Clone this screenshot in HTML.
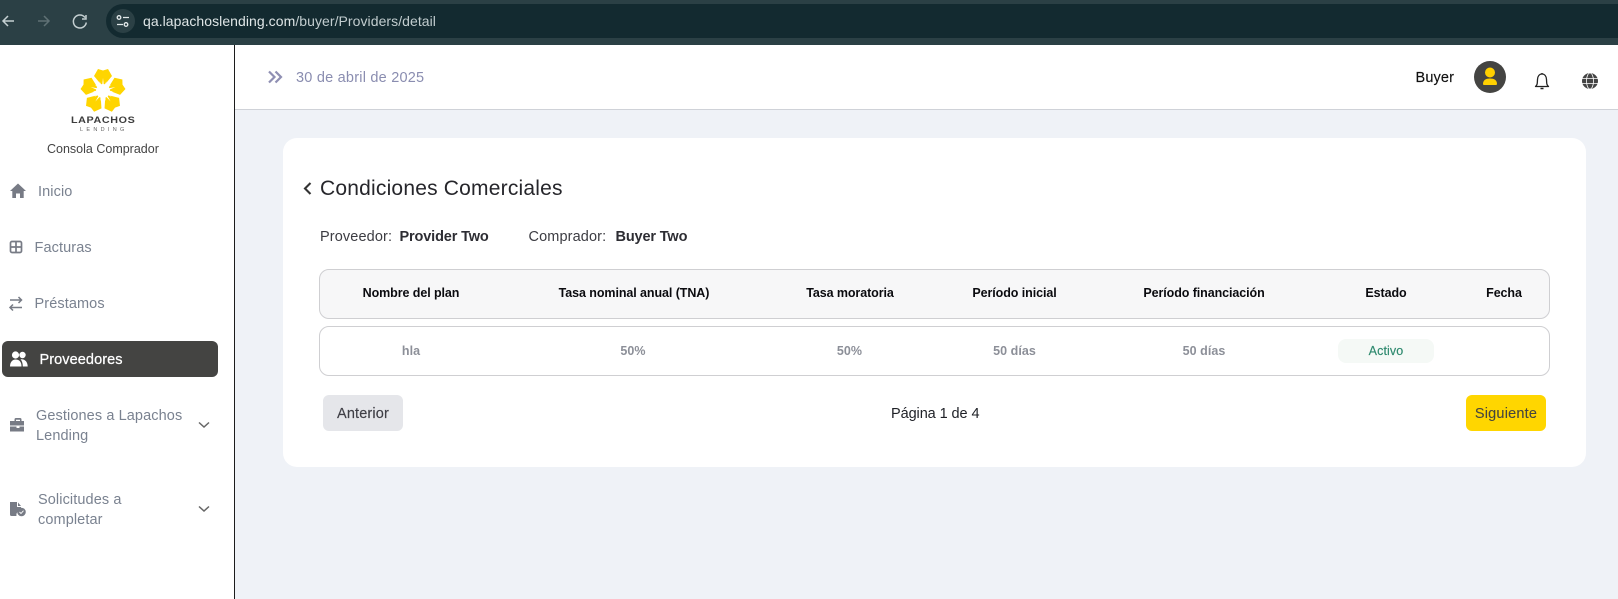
<!DOCTYPE html>
<html lang="es"><head><meta charset="utf-8"><title>Condiciones Comerciales</title>
<style>
*{box-sizing:border-box;margin:0;padding:0}
html,body{width:1618px;height:599px;overflow:hidden;background:#fff;font-family:"Liberation Sans",sans-serif}
.a{position:absolute}
.t{position:absolute;white-space:nowrap;line-height:20px;height:20px}
.c{transform:translateX(-50%)}
.nav{font-size:14.500px;color:#7a8290;letter-spacing:.1px}
.h{font-size:12.500px;font-weight:700;color:#0b0b0f;letter-spacing:-.08px}
.d{font-size:12.500px;font-weight:700;color:#8c8f98;letter-spacing:.05px}
svg{position:absolute;display:block;overflow:visible}
</style></head><body>
<!-- browser bar -->
<div class="a" style="left:0;top:0;width:1618px;height:45px;background:#2b4045"></div>
<div class="a" style="left:106px;top:4px;width:1512px;height:34px;background:#132a30;border-radius:17px 0 0 17px"></div>
<div class="a" style="left:111px;top:9px;width:24px;height:24px;border-radius:50%;background:#2b4045"></div>
<svg style="left:0;top:0" width="140" height="44" fill="none">
<path d="M14 21H3M8 16L3 21L8 26" stroke="#c5d0d2" stroke-width="1.500"/>
<path d="M38 21H49M44 16L49 21L44 26" stroke="#5f7175" stroke-width="1.500"/>
<path d="M85 17.500A6.500 6.500 0 1 0 86.300 22.500M86 15V19H82" stroke="#c5d0d2" stroke-width="1.500"/>
<circle cx="119" cy="17.500" r="1.800" stroke="#e3e9ea" stroke-width="1.300"/><path d="M123 17.500H129M117 24.500H123" stroke="#e3e9ea" stroke-width="1.300"/><circle cx="126" cy="24.500" r="1.800" stroke="#e3e9ea" stroke-width="1.300"/>
</svg>
<div class="t" style="left:143px;top:11px;font-size:14px;color:#dfe6e7;letter-spacing:.06px">qa.lapachoslending.com<span style="color:#c2cdcf">/buyer/Providers/detail</span></div>

<!-- sidebar -->
<div class="a" style="left:0;top:45px;width:235px;height:554px;background:#fff;border-right:1px solid #1c1c1c"></div>
<svg style="left:103px;top:91px" width="1" height="1">
<g fill="#ffd500">
<path d="M-1.500-6L-9-15L-5-22L0-20.500L5-22L9-15L1.500-6Z"/>
<path transform="rotate(72)" d="M-1.500-6L-9-15L-5-22L0-20.500L5-22L9-15L1.500-6Z"/>
<path transform="rotate(144)" d="M-1.500-6L-9-15L-5-22L0-20.500L5-22L9-15L1.500-6Z"/>
<path transform="rotate(216)" d="M-1.500-6L-9-15L-5-22L0-20.500L5-22L9-15L1.500-6Z"/>
<path transform="rotate(288)" d="M-1.500-6L-9-15L-5-22L0-20.500L5-22L9-15L1.500-6Z"/>
</g>
<circle r="7" fill="#fff"/>
<g fill="#fff">
<path d="M-.8-6L0-13L.8-6Z"/><path transform="rotate(72)" d="M-.8-6L0-13L.8-6Z"/><path transform="rotate(144)" d="M-.8-6L0-13L.8-6Z"/><path transform="rotate(216)" d="M-.8-6L0-13L.8-6Z"/><path transform="rotate(288)" d="M-.8-6L0-13L.8-6Z"/>
<path transform="rotate(20)" d="M-.6-6L0-10.500L.6-6Z"/><path transform="rotate(92)" d="M-.6-6L0-10.500L.6-6Z"/><path transform="rotate(164)" d="M-.6-6L0-10.500L.6-6Z"/><path transform="rotate(236)" d="M-.6-6L0-10.500L.6-6Z"/><path transform="rotate(308)" d="M-.6-6L0-10.500L.6-6Z"/>
<path transform="rotate(-20)" d="M-.6-6L0-10.500L.6-6Z"/><path transform="rotate(52)" d="M-.6-6L0-10.500L.6-6Z"/><path transform="rotate(124)" d="M-.6-6L0-10.500L.6-6Z"/><path transform="rotate(196)" d="M-.6-6L0-10.500L.6-6Z"/><path transform="rotate(268)" d="M-.6-6L0-10.500L.6-6Z"/>
</g>
</svg>
<div class="t" style="left:70.500px;top:111px;font-size:9.500px;font-weight:700;color:#3d3d3d;letter-spacing:.55px;transform:scaleX(1.130);transform-origin:left">LAPACHOS</div>
<div class="t" style="left:80px;top:120px;font-size:5.500px;color:#666;letter-spacing:3.300px">LENDING</div>
<div class="t" style="left:47px;top:139px;font-size:12.500px;color:#444;letter-spacing:0">Consola Comprador</div>

<svg style="left:0;top:0" width="235" height="560" fill="#777b85">
<path d="M18 183.500L10 191H12.300V198H16V193.500H20V198H23.700V191H26Z"/>
<rect x="10.500" y="241.500" width="11" height="11" rx="1.500" fill="none" stroke="#777b85" stroke-width="1.700"/>
<path d="M10.500 247H21.500M16 241.500V252.500" stroke="#777b85" stroke-width="1.700"/>
<path d="M10 300H21.500M18.500 297L21.500 300L18.500 303M22 307.500H10M13 304.500L10 307.500L13 310.500" fill="none" stroke="#777b85" stroke-width="1.500"/>
<rect x="2" y="341" width="216" height="36" rx="6" fill="#444442"/>
<g fill="#fff"><circle cx="15.500" cy="355" r="3.600"/><circle cx="22.500" cy="355" r="3.200"/><path d="M10 366.500C10 361.500 13 359.500 15.500 359.500C19 359.500 21.500 361.500 21.500 366.500Z"/><path d="M20.500 359.300C25 358.800 27.700 362 27.700 366.500H22.800C22.800 363.500 22 361 20.500 359.300Z"/></g>
<path d="M14.500 421V419.500C14.500 418.500 15 418 16 418H20C21 418 21.500 418.500 21.500 419.500V421H24V425.500H10V421ZM16 421H20V419.700H16ZM10 426.500H16.500V428H19.500V426.500H24V431.500H10Z"/>
<path d="M10 502H17V507H21V510A5 5 0 0 0 16.500 516H11.500A1.500 1.500 0 0 1 10 514.500ZM18 502.500L21 506H18Z"/>
<circle cx="21.500" cy="512" r="4.300"/><path d="M19.500 512L21 513.500L23.500 510.700" fill="none" stroke="#fff" stroke-width=".9"/>
<path d="M199 422.500L204 427L209 422.500M199 506.500L204 511L209 506.500" fill="none" stroke="#666" stroke-width="1.500"/>
</svg>
<div class="t nav" style="left:38px;top:182px">Inicio</div>
<div class="t nav" style="left:34.500px;top:238px">Facturas</div>
<div class="t nav" style="left:34.500px;top:294px">Préstamos</div>
<div class="t" style="left:39.500px;top:350px;font-size:14.500px;font-weight:400;color:#fff;letter-spacing:.08px;-webkit-text-stroke:.25px #fff">Proveedores</div>
<div class="t nav" style="left:36px;top:406px">Gestiones a Lapachos</div>
<div class="t nav" style="left:36px;top:426px">Lending</div>
<div class="t nav" style="left:38px;top:490px">Solicitudes a</div>
<div class="t nav" style="left:38px;top:510px">completar</div>

<!-- main -->
<div class="a" style="left:235px;top:45px;width:1383px;height:65px;background:#fff;border-bottom:1px solid #cfd2d8"></div>
<div class="a" style="left:235px;top:110px;width:1383px;height:489px;background:#eff2f7"></div>
<svg style="left:0;top:0" width="1618" height="120" fill="none">
<path d="M269 71.500L274.500 77L269 82.500M275.500 71.500L281 77L275.500 82.500" stroke="#8f8fb3" stroke-width="2.200"/>
<circle cx="1490" cy="77" r="16" fill="#444442"/>
<circle cx="1490" cy="72.500" r="5" fill="#ffd000"/>
<path d="M1483 84C1483 80 1486 78.500 1490 78.500C1494 78.500 1497 80 1497 84C1497 84.500 1496.500 85 1496 85H1484C1483.500 85 1483 84.500 1483 84Z" fill="#ffd000"/>
<path d="M1535.500 86.500C1537.500 85 1537.300 83 1537.500 79.500C1537.700 76 1539.500 74 1542 74C1544.500 74 1546.300 76 1546.500 79.500C1546.700 83 1546.500 85 1548.500 86.500Z" stroke="#222" stroke-width="1.300" stroke-linejoin="round"/>
<path d="M1542 73V74.500M1540.500 88.500H1543.500" stroke="#222" stroke-width="1.400"/>
<circle cx="1590" cy="81" r="8" fill="#444"/>
<path d="M1582 78.500H1598M1582 83.500H1598" stroke="#fff" stroke-width=".8"/>
<ellipse cx="1590" cy="81" rx="3.500" ry="8" stroke="#fff" stroke-width=".8"/>
</svg>
<div class="t" style="left:296px;top:68px;font-size:14.500px;color:#8a8db0;letter-spacing:.22px">30 de abril de 2025</div>
<div class="t" style="left:1415.500px;top:68px;font-size:14.500px;color:#111;letter-spacing:.15px;-webkit-text-stroke:.15px #111">Buyer</div>

<!-- card -->
<div class="a" style="left:283px;top:138px;width:1303px;height:329px;background:#fff;border-radius:14px"></div>
<svg style="left:0;top:0" width="340" height="200" fill="none"><path d="M310.500 183L305 188.500L310.500 194" stroke="#333" stroke-width="2.100"/></svg>
<div class="t" style="left:320px;top:179px;font-size:21px;color:#26262b;letter-spacing:.2px">Condiciones Comerciales</div>
<div class="t" style="left:320px;top:227px;font-size:14.500px;color:#3c3c42;letter-spacing:.12px">Proveedor:</div>
<div class="t" style="left:399.500px;top:227px;font-size:14.500px;font-weight:700;color:#2d2d33;letter-spacing:-.14px">Provider Two</div>
<div class="t" style="left:528.500px;top:227px;font-size:14.500px;color:#3c3c42;letter-spacing:.12px">Comprador:</div>
<div class="t" style="left:615.500px;top:227px;font-size:14.500px;font-weight:700;color:#2d2d33;letter-spacing:-.14px">Buyer Two</div>

<div class="a" style="left:319px;top:269px;width:1231px;height:50px;background:#f7f7f8;border:1px solid #cfcfd2;border-radius:10px"></div>
<div class="t h c" style="left:411px;top:283px">Nombre del plan</div>
<div class="t h c" style="left:634px;top:283px">Tasa nominal anual (TNA)</div>
<div class="t h c" style="left:850px;top:283px">Tasa moratoria</div>
<div class="t h c" style="left:1014.500px;top:283px">Período inicial</div>
<div class="t h c" style="left:1204px;top:283px">Período financiación</div>
<div class="t h c" style="left:1386px;top:283px">Estado</div>
<div class="t h c" style="left:1504px;top:283px">Fecha</div>

<div class="a" style="left:319px;top:326px;width:1231px;height:50px;background:#fff;border:1px solid #cfcfd2;border-radius:10px"></div>
<div class="t d c" style="left:411px;top:341px">hla</div>
<div class="t d c" style="left:633px;top:341px">50%</div>
<div class="t d c" style="left:849.500px;top:341px">50%</div>
<div class="t d c" style="left:1014.500px;top:341px">50 días</div>
<div class="t d c" style="left:1204px;top:341px">50 días</div>
<div class="a" style="left:1338px;top:339px;width:96px;height:24px;background:#f5f9f6;border-radius:8px"></div>
<div class="t c" style="left:1386px;top:341px;font-size:12.500px;color:#2f8a6f;letter-spacing:.1px;-webkit-text-stroke:.15px #2f8a6f">Activo</div>

<div class="a" style="left:323px;top:395px;width:80px;height:36px;background:#e5e6ea;border-radius:6px"></div>
<div class="t c" style="left:363px;top:403.500px;font-size:14.500px;color:#3f3f46;letter-spacing:.15px;-webkit-text-stroke:.15px #3f3f46">Anterior</div>
<div class="t" style="left:891px;top:404px;font-size:14.500px;color:#1e2026;letter-spacing:-.08px">Página 1 de 4</div>
<div class="a" style="left:1466px;top:395px;width:80px;height:36px;background:#ffd600;border-radius:6px"></div>
<div class="t c" style="left:1506px;top:403.500px;font-size:14.500px;color:#46463f;letter-spacing:.2px;-webkit-text-stroke:.1px #46463f">Siguiente</div>
</body></html>
